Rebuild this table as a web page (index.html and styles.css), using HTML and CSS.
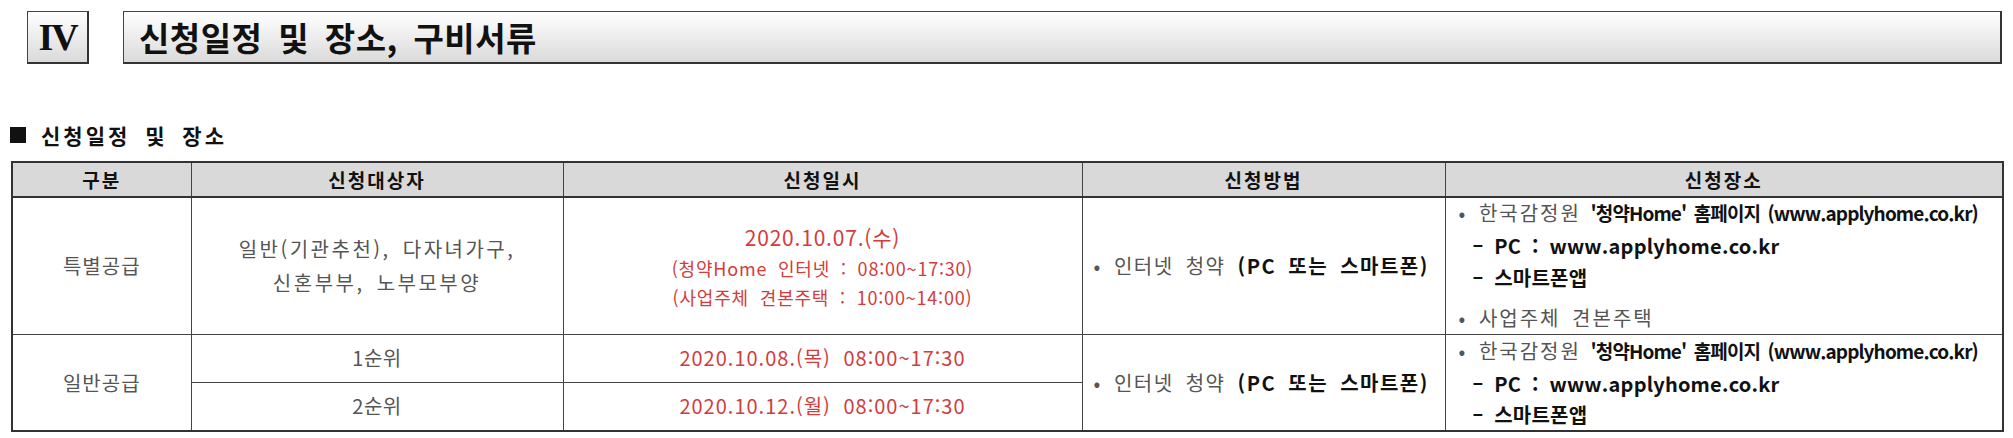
FILE: index.html
```html
<!DOCTYPE html>
<html lang="ko">
<head>
<meta charset="utf-8">
<title>신청일정 및 장소, 구비서류</title>
<link rel="stylesheet" href="styles.css">
</head>
<body>
<div class="page">
  <div class="chapter">
    <div class="chapter-num">IV</div>
    <div class="chapter-title">신청일정 및 장소, 구비서류</div>
  </div>
  <h2 class="section"><span class="sq"></span>신청일정 및 장소</h2>
  <table class="sched">
    <colgroup>
      <col class="c1"><col class="c2"><col class="c3"><col class="c4"><col class="c5">
    </colgroup>
    <thead>
      <tr><th>구분</th><th>신청대상자</th><th>신청일시</th><th>신청방법</th><th>신청장소</th></tr>
    </thead>
    <tbody>
      <tr class="r1">
        <td class="center kind">특별공급</td>
        <td class="center target">일반(기관추천), 다자녀가구,<br>신혼부부, 노부모부양</td>
        <td class="center red">
          <div class="date-main">2020.10.07.(수)</div>
          <div class="date-sub">(청약Home 인터넷 : 08:00~17:30)</div>
          <div class="date-sub">(사업주체 견본주택 : 10:00~14:00)</div>
        </td>
        <td class="method"><span class="gray">• 인터넷 청약</span> <b>(PC 또는 스마트폰)</b></td>
        <td class="place">
          <div class="pl"><span class="gray">• 한국감정원</span> <b class="tight">'청약Home' 홈페이지 (www.applyhome.co.kr)</b></div>
          <div class="pl sub"><b>– PC : www.applyhome.co.kr</b></div>
          <div class="pl sub"><b>– 스마트폰앱</b></div>
          <div class="pl gap"><span class="gray">• 사업주체 견본주택</span></div>
        </td>
      </tr>
      <tr class="r2">
        <td class="center kind" rowspan="2">일반공급</td>
        <td class="center rank">1순위</td>
        <td class="center red date-row">2020.10.08.(목) 08:00~17:30</td>
        <td class="method" rowspan="2"><span class="gray">• 인터넷 청약</span> <b>(PC 또는 스마트폰)</b></td>
        <td class="place p2" rowspan="2">
          <div class="pl"><span class="gray">• 한국감정원</span> <b class="tight">'청약Home' 홈페이지 (www.applyhome.co.kr)</b></div>
          <div class="pl sub"><b>– PC : www.applyhome.co.kr</b></div>
          <div class="pl sub"><b>– 스마트폰앱</b></div>
        </td>
      </tr>
      <tr class="r2">
        <td class="center rank">2순위</td>
        <td class="center red date-row">2020.10.12.(월) 08:00~17:30</td>
      </tr>
    </tbody>
  </table>
</div>
</body>
</html>
```

FILE: styles.css
```css
html, body {
  margin: 0;
  padding: 0;
  background: #fff;
}
body {
  font-family: "Noto Sans CJK KR", "Noto Sans", sans-serif;
  color: #222;
}
.page {
  padding: 11px 11px 0 11px;
}
.chapter {
  display: flex;
  gap: 34px;
  padding-left: 16px;
  height: 53px;
}
.chapter-num,
.chapter-title {
  box-sizing: border-box;
  height: 53px;
  border: 1px solid #444;
  border-right: 2px solid #333;
  border-bottom: 2px solid #333;
  background: linear-gradient(#ffffff, #dadada);
  display: flex;
  align-items: center;
}
.chapter-num {
  width: 62px;
  justify-content: center;
  font-family: "Liberation Serif", "DejaVu Serif", serif;
  font-weight: 700;
  font-size: 38px;
  letter-spacing: -2px;
  color: #111;
}
.chapter-title {
  flex: 1;
  padding-left: 15px;
  font-size: 33px;
  font-weight: 700;
  letter-spacing: 0.5px;
  color: #111;
  word-spacing: 6px;
}
.section {
  margin: 56px 0 0 -1px;
  height: 30px;
  display: flex;
  align-items: center;
  font-size: 21px;
  font-weight: 700;
  line-height: 30px;
  color: #111;
  letter-spacing: 3px;
  word-spacing: 6px;
}
.sq {
  display: inline-block;
  width: 16px;
  height: 16px;
  background: #111;
  margin-right: 15px;
}
.sched {
  margin-top: 11px;
  width: 1991px;
  border-collapse: collapse;
  table-layout: fixed;
  border: 2px solid #333;
}
.c1 { width: 179px; }
.c2 { width: 372px; }
.c3 { width: 519px; }
.c4 { width: 363px; }
.c5 { width: 558px; }
.sched th,
.sched td {
  border: 1px solid #444;
  padding: 0;
  vertical-align: middle;
  overflow: hidden;
}
.sched th {
  height: 33px;
  background: #d9d9d9;
  font-size: 19px;
  font-weight: 700;
  color: #111;
  letter-spacing: 2px;
  border-bottom: 2px solid #333;
  line-height: 33px;
}
.sched td {
  font-size: 20px;
  color: #555;
  letter-spacing: 1px;
  line-height: 30px;
}
.r1 td { height: 135px; }
.r2 td { height: 46px; }
.center { text-align: center; }
.kind { letter-spacing: 1.5px; }
.target {
  line-height: 34px !important;
  letter-spacing: 2.5px !important;
  word-spacing: 4px;
}
.rank { letter-spacing: 0.5px !important; }
.red { color: #d23c3c !important; }
.date-main {
  font-size: 21px;
  line-height: 33px;
  letter-spacing: 0.8px;
}
.date-sub {
  font-size: 18px;
  line-height: 29px;
  letter-spacing: 0.8px;
  word-spacing: 5px;
}
.date-row {
  font-size: 21px;
  letter-spacing: 1px;
  word-spacing: 6px;
}
.method {
  padding-left: 11px !important;
  font-size: 20px !important;
  letter-spacing: 1.5px !important;
  word-spacing: 5px;
}
.gray { color: #555; }
.sched b {
  color: #111;
  font-weight: 700;
}
.place {
  padding-left: 13px !important;
  font-size: 20px !important;
}
.pl {
  line-height: 32px;
  white-space: nowrap;
  word-spacing: 4px;
  letter-spacing: 0;
}
.pl:first-child { line-height: 30px; margin-bottom: 2px; }
.p2 .pl { line-height: 31px; }
.pl .gray { letter-spacing: 2px; }
.pl.sub {
  padding-left: 14px;
}
.pl.sub b { letter-spacing: 0.2px; word-spacing: 5px; }
.pl.gap {
  margin-top: 8px;
}
.tight {
  font-size: 19px;
  letter-spacing: -0.9px;
  word-spacing: 3px;
}
```
